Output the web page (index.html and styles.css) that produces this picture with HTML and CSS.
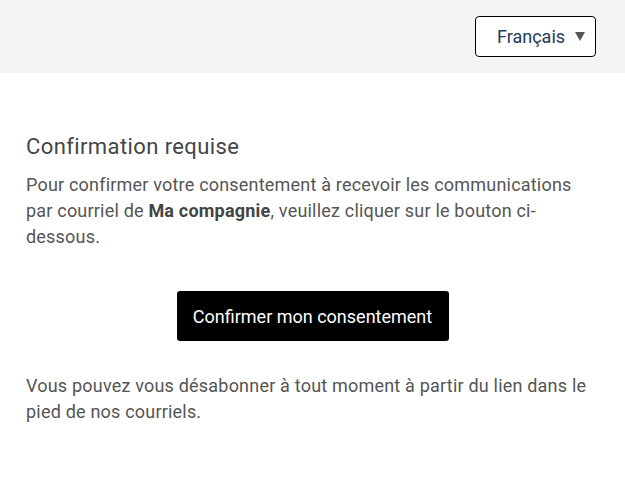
FILE: index.html
```html
<!DOCTYPE html>
<html lang="fr">
  <head>
    <meta charset="UTF-8" />
    <meta name="viewport" content="width=device-width, initial-scale=1.0" />
    <title>Confirmation requise</title>
    <link rel="stylesheet" href="styles.css">
  </head>
  <body>
    <div class="topbar">
      <div class="lang">
        <span class="lang-label">Français</span>
        <span class="lang-arrow"></span>
      </div>
    </div>
    <div class="content">
      <h1>Confirmation requise</h1>
      <p>Pour confirmer votre consentement à recevoir les communications par courriel de <strong>Ma compagnie</strong>, veuillez cliquer sur le bouton ci-dessous.</p>
      <div class="actions">
        <button class="confirm">Confirmer mon consentement</button>
      </div>
      <p>Vous pouvez vous désabonner à tout moment à partir du lien dans le pied de nos courriels.</p>
    </div>
  </body>
</html>
```

FILE: styles.css
```css
* {
  margin: 0;
  padding: 0;
  box-sizing: border-box;
}
body {
  font-family: Roboto, "Liberation Sans", sans-serif;
  color: #555;
  background: #fff;
}
.topbar {
  height: 73px;
  background: #f4f4f4;
  display: flex;
  justify-content: flex-end;
  align-items: flex-start;
  padding: 16px 29px 0 0;
}
.lang {
  width: 121px;
  height: 41px;
  border: 1px solid #000;
  border-radius: 4px;
  background: #fff;
  display: flex;
  align-items: center;
  padding-left: 21px;
}
.lang-label {
  font-size: 18px;
  color: #1f3a5a;
}
.lang-arrow {
  margin-left: 10px;
  width: 0;
  height: 0;
  border-left: 5px solid transparent;
  border-right: 5px solid transparent;
  border-top: 9px solid #555;
}
.content {
  padding: 59px 26px 0 26px;
}
h1 {
  font-size: 22px;
  font-weight: 400;
  letter-spacing: 0.4px;
  color: #444;
  line-height: 30px;
  margin-bottom: 10px;
}
p {
  font-size: 18px;
  letter-spacing: 0.2px;
  line-height: 26px;
}
strong {
  font-weight: 700;
  color: #444;
}
.actions {
  display: flex;
  justify-content: center;
  margin: 41px 0 32px 0;
}
.confirm {
  width: 272px;
  height: 50px;
  background: #000;
  color: #fff;
  border: none;
  border-radius: 3px;
  font-family: Roboto, "Liberation Sans", sans-serif;
  font-size: 18px;
}
```
